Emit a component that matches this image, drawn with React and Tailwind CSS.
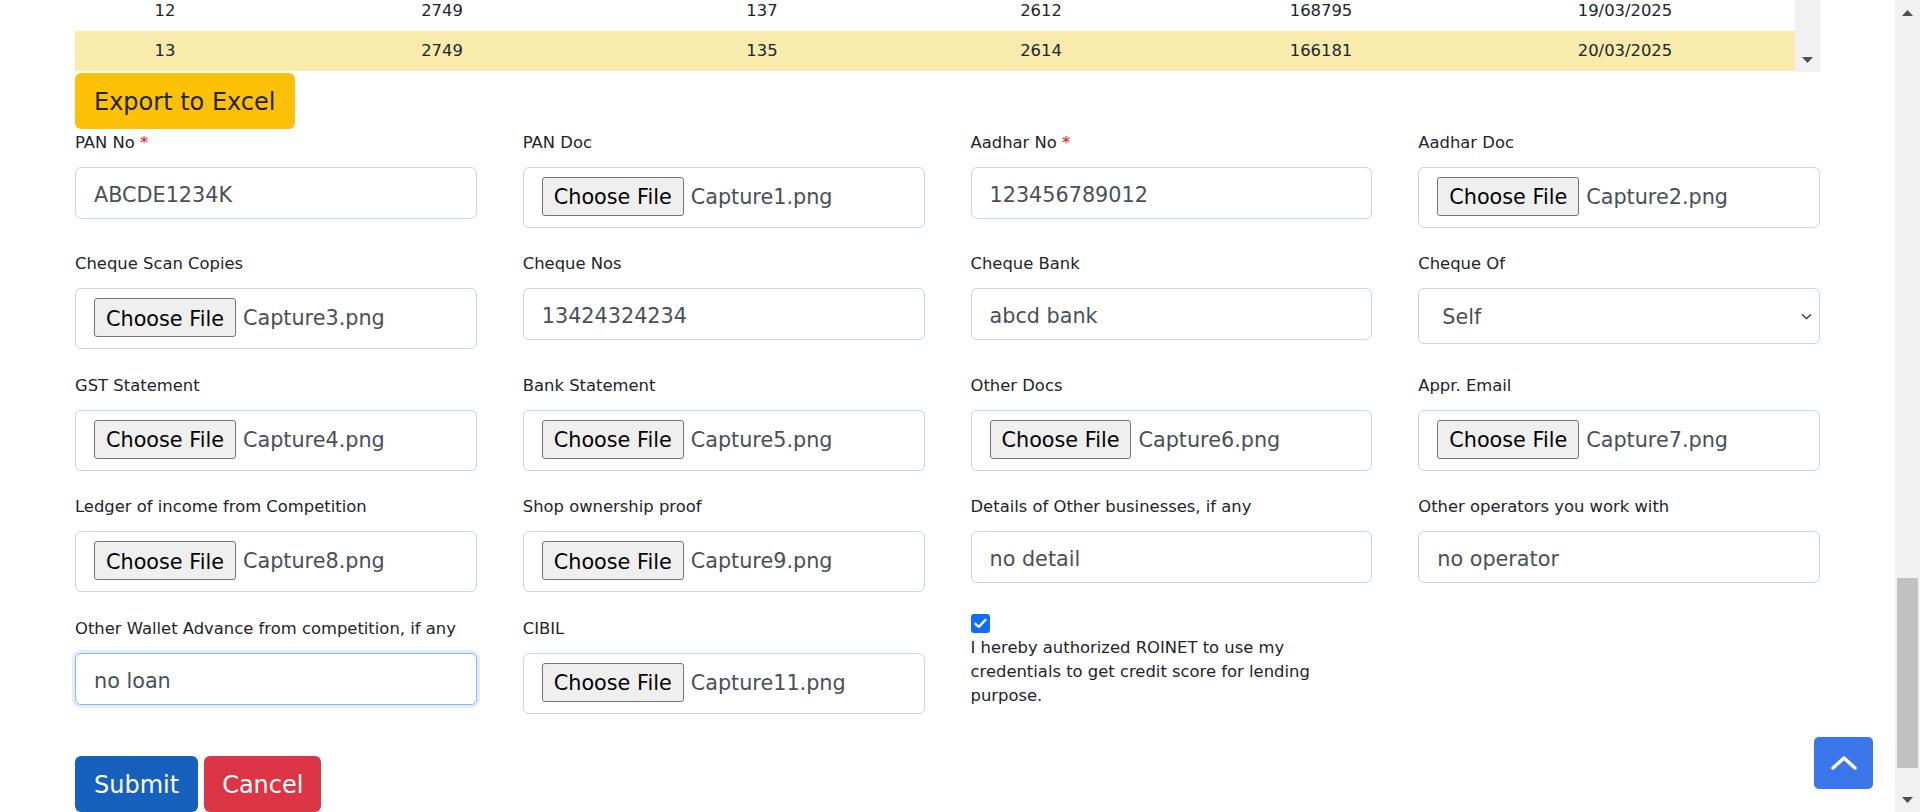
import React from "react";

const rows = [
  { sn: "12", a: "2749", b: "137", c: "2612", d: "168795", date: "19/03/2025" },
  { sn: "13", a: "2749", b: "135", c: "2614", d: "166181", date: "20/03/2025", hl: true },
];

function Label({ text, required }) {
  return (
    <div className="h-[24px] leading-[24px] mb-[12px] text-[16.4px] text-[#212529] whitespace-nowrap">
      {text}
      {required && <span className="text-[#ff0000]"> *</span>}
    </div>
  );
}

function TextField({ label, value, required, focused }) {
  return (
    <div>
      <Label text={label} required={required} />
      <input
        readOnly
        defaultValue={value}
        className={
          "w-full h-[52px] rounded-[6px] border bg-white px-[18px] pt-[4px] text-[20.75px] text-[#495057] outline-none " +
          (focused
            ? "border-[#86b7fe] shadow-[0_0_0_3px_rgba(13,110,253,0.12)]"
            : "border-[#ced4da]")
        }
      />
    </div>
  );
}

function FileField({ label, file }) {
  return (
    <div>
      <Label text={label} />
      <div className="h-[61px] rounded-[6px] border border-[#ced4da] bg-white pl-[18px] pt-[9px] flex items-start">
        <div className="flex items-center">
          <button className="h-[39px] px-[11px] pt-[3px] rounded-[3px] border border-[#767676] bg-[#efefef] text-black text-[20.75px] leading-none">
            Choose File
          </button>
          <span className="ml-[7px] pt-[3px] text-[20.75px] text-[#495057]">{file}</span>
        </div>
      </div>
    </div>
  );
}

function SelectField({ label, value }) {
  return (
    <div>
      <Label text={label} />
      <div className="relative">
        <select
          defaultValue={value}
          className="appearance-none w-full h-[56px] rounded-[6px] border border-[#ced4da] bg-white pl-[23px] pr-10 pt-[4px] text-[20.75px] text-[#495057] outline-none"
        >
          <option>Self</option>
          <option>Other</option>
        </select>
        <svg className="absolute right-[8px] top-[25px]" width="11" height="7" viewBox="0 0 11 7">
          <path d="M1 1.5 L5.5 5.5 L10 1.5" fill="none" stroke="#343a40" strokeWidth="1.4" />
        </svg>
      </div>
    </div>
  );
}

function ConsentField() {
  return (
    <div className="-mt-[2.5px]">
      <div className="w-[19px] h-[19px] rounded-[3px] bg-[#0d6efd] flex items-center justify-center">
        <svg width="13" height="11" viewBox="0 0 13 11">
          <path d="M1.5 5.8 L4.8 9 L11.5 1.8" fill="none" stroke="white" strokeWidth="2.4" strokeLinecap="round" strokeLinejoin="round" />
        </svg>
      </div>
      <p className="mt-[2.5px] text-[16.4px] leading-[24.3px] text-[#212529]">
        I hereby authorized ROINET to use my credentials to get credit score for lending purpose.
      </p>
    </div>
  );
}

function Triangle({ up }) {
  return (
    <svg width="11" height="6" viewBox="0 0 11 6">
      <polygon points={up ? "0,6 11,6 5.5,0" : "0,0 11,0 5.5,6"} fill="#505050" />
    </svg>
  );
}

export default function App() {
  return (
    <div className="relative flex h-[812px] overflow-hidden bg-white font-['DejaVu_Sans',sans-serif]">
      <div className="flex-1 px-[75px]">
        {/* table, scrolled */}
        <div className="flex h-[72px] overflow-hidden">
          <div className="flex-1 -mt-[8px]">
            {rows.map((r) => (
              <div
                key={r.sn}
                className={
                  "grid grid-cols-[180px_374px_266px_292px_268px_1fr] items-center text-center text-[16.4px] text-[#212529] " +
                  (r.hl ? "h-[40px] bg-[#f9ebab]" : "h-[39px] bg-white")
                }
              >
                <div>{r.sn}</div>
                <div>{r.a}</div>
                <div>{r.b}</div>
                <div>{r.c}</div>
                <div>{r.d}</div>
                <div>{r.date}</div>
              </div>
            ))}
          </div>
          <div className="w-[25px] bg-[#f1f1f1] flex flex-col justify-end items-center pb-[9px]">
            <Triangle />
          </div>
        </div>

        <button className="mt-[1px] h-[56px] px-[19px] pt-[2px] rounded-[6px] bg-[#ffc107] text-[24px] text-[#212529]">
          Export to Excel
        </button>

        <div className="mt-[1.5px] grid grid-cols-4 gap-x-[46px] gap-y-[24.5px] items-start">
          <TextField label="PAN No" required value="ABCDE1234K" />
          <FileField label="PAN Doc" file="Capture1.png" />
          <TextField label="Aadhar No" required value="123456789012" />
          <FileField label="Aadhar Doc" file="Capture2.png" />

          <FileField label="Cheque Scan Copies" file="Capture3.png" />
          <TextField label="Cheque Nos" value="13424324234" />
          <TextField label="Cheque Bank" value="abcd bank" />
          <SelectField label="Cheque Of" value="Self" />

          <FileField label="GST Statement" file="Capture4.png" />
          <FileField label="Bank Statement" file="Capture5.png" />
          <FileField label="Other Docs" file="Capture6.png" />
          <FileField label="Appr. Email" file="Capture7.png" />

          <FileField label="Ledger of income from Competition" file="Capture8.png" />
          <FileField label="Shop ownership proof" file="Capture9.png" />
          <TextField label="Details of Other businesses, if any" value="no detail" />
          <TextField label="Other operators you work with" value="no operator" />

          <TextField label="Other Wallet Advance from competition, if any" value="no loan" focused />
          <FileField label="CIBIL" file="Capture11.png" />
          <ConsentField />
          <div />
        </div>

        <div className="mt-[42.5px] flex gap-[6px]">
          <button className="h-[56px] px-[19px] pt-[2px] rounded-[6px] bg-[#1761be] text-[24px] text-white">Submit</button>
          <button className="h-[56px] px-[18px] pt-[2px] rounded-[6px] bg-[#dc3545] text-[24px] text-white">Cancel</button>
        </div>
      </div>

      {/* page scrollbar */}
      <div className="w-[25px] bg-[#f1f1f1] flex flex-col items-center">
        <div className="h-[25px] flex items-center justify-center">
          <Triangle up />
        </div>
        <div className="flex-1 w-full px-[2px]">
          <div className="mt-[553px] h-[190px] bg-[#c1c1c1]" />
        </div>
        <div className="h-[25px] flex items-center justify-center">
          <Triangle />
        </div>
      </div>

      {/* back to top */}
      <button className="absolute left-[1814px] top-[737px] w-[59px] h-[52px] rounded-[5px] bg-[#3b76ea] flex items-center justify-center">
        <svg width="28" height="16" viewBox="0 0 28 16">
          <path d="M3 13 L14 3 L25 13" fill="none" stroke="white" strokeWidth="3.5" strokeLinecap="round" strokeLinejoin="round" />
        </svg>
      </button>
    </div>
  );
}
